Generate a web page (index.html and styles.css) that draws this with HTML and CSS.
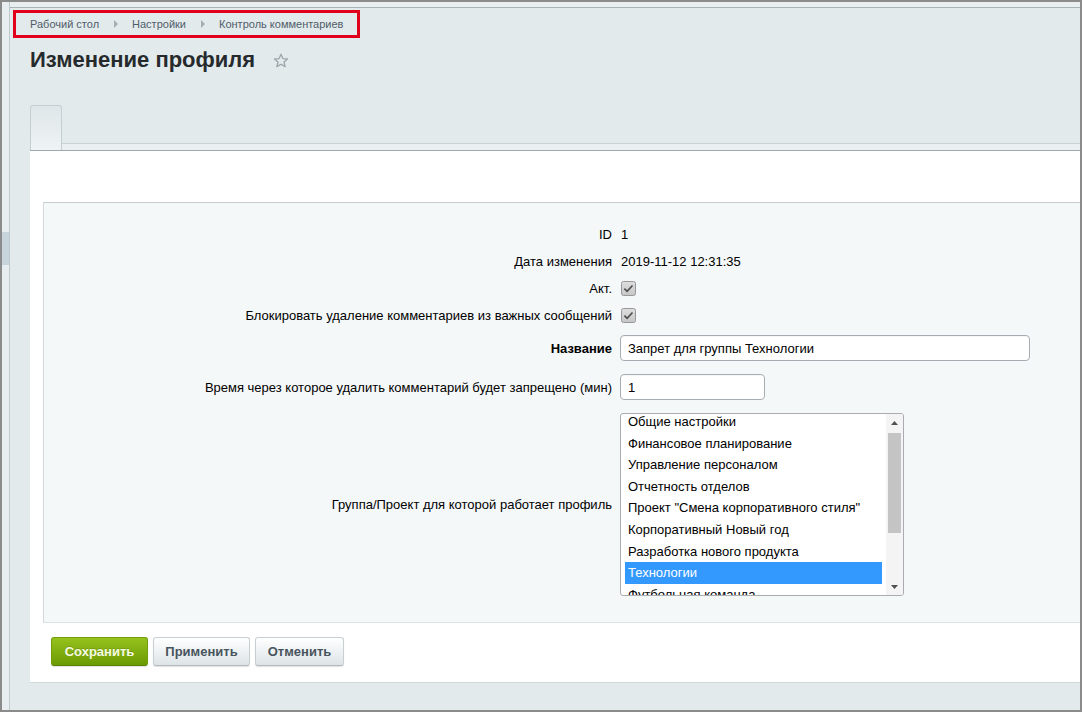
FILE: index.html
```html
<!DOCTYPE html>
<html lang="ru">
<head>
<meta charset="utf-8">
<title>Изменение профиля</title>
<link rel="stylesheet" href="styles.css">
</head>
<body>
<div class="frame">
  <div class="side"><div class="handle"></div></div>
  <div class="main">
    <div class="topline"></div>
    <div class="crumbs">
      <span class="crumb">Рабочий стол</span>
      <span class="sep"></span>
      <span class="crumb">Настройки</span>
      <span class="sep"></span>
      <span class="crumb">Контроль комментариев</span>
    </div>
    <div class="title-row">
      <h1 class="title">Изменение профиля</h1>
      <svg class="star" width="16" height="16" viewBox="0 0 16 16"><path d="M8 1.3l1.9 4.3 4.6.4-3.5 3 1.1 4.6L8 11.2l-4.1 2.4 1.1-4.6-3.5-3 4.6-.4z" fill="none" stroke="#9ba6ac" stroke-width="1.3" stroke-linejoin="round"/></svg>
    </div>
    <div class="tabs">
      <div class="tab"></div>
      <div class="tabfill"><div class="tabstrip"></div></div>
    </div>
    <div class="panel">
      <div class="form">
        <div class="row r27"><div class="label">ID</div><div class="val">1</div></div>
        <div class="row r27"><div class="label">Дата изменения</div><div class="val">2019-11-12 12:31:35</div></div>
        <div class="row r27"><div class="label">Акт.</div><div class="val"><svg class="cb" width="15" height="15" viewBox="0 0 15 15"><defs><linearGradient id="g1" x1="0" y1="0" x2="0" y2="1"><stop offset="0" stop-color="#dedede"/><stop offset="1" stop-color="#c6c6c6"/></linearGradient></defs><rect x="0.5" y="0.5" width="14" height="14" rx="2" fill="url(#g1)" stroke="#989898"/><path d="M3.4 7.6l2.7 2.7 5.4-5.8" fill="none" stroke="#4d4d4d" stroke-width="1.6"/></svg></div></div>
        <div class="row r27"><div class="label">Блокировать удаление комментариев из важных сообщений</div><div class="val"><svg class="cb" width="15" height="15" viewBox="0 0 15 15"><rect x="0.5" y="0.5" width="14" height="14" rx="2" fill="url(#g1)" stroke="#989898"/><path d="M3.4 7.6l2.7 2.7 5.4-5.8" fill="none" stroke="#4d4d4d" stroke-width="1.6"/></svg></div></div>
        <div class="row r-name"><div class="label bold">Название</div><div class="val"><div class="input wide">Запрет для группы Технологии</div></div></div>
        <div class="row r-time"><div class="label">Время через которое удалить комментарий будет запрещено (мин)</div><div class="val"><div class="input narrow">1</div></div></div>
        <div class="row r-list"><div class="label">Группа/Проект для которой работает профиль</div>
          <div class="val">
            <div class="listbox">
              <div class="opts">
                <div class="opts-inner">
                  <div class="opt">Общие настройки</div>
                  <div class="opt">Финансовое планирование</div>
                  <div class="opt">Управление персоналом</div>
                  <div class="opt">Отчетность отделов</div>
                  <div class="opt">Проект "Смена корпоративного стиля"</div>
                  <div class="opt">Корпоративный Новый год</div>
                  <div class="opt">Разработка нового продукта</div>
                  <div class="opt sel">Технологии</div>
                  <div class="opt">Футбольная команда</div>
                </div>
              </div>
              <div class="scroll">
                <div class="arrow"><svg width="7" height="4" viewBox="0 0 7 4"><path d="M0 4L3.5 0 7 4z" fill="#505050"/></svg></div>
                <div class="track"><div class="thumb"></div></div>
                <div class="arrow"><svg width="7" height="4" viewBox="0 0 7 4"><path d="M0 0L3.5 4 7 0z" fill="#505050"/></svg></div>
              </div>
            </div>
          </div>
        </div>
      </div>
      <div class="buttons">
        <button class="btn save">Сохранить</button>
        <button class="btn apply">Применить</button>
        <button class="btn cancel">Отменить</button>
      </div>
    </div>
  </div>
</div>
</body>
</html>
```

FILE: styles.css
```css
html, body {
  margin: 0;
  padding: 0;
}
body {
  font-family: "Liberation Sans", Arial, sans-serif;
  font-size: 13px;
  color: #000;
}
.frame {
  width: 1082px;
  height: 712px;
  box-sizing: border-box;
  border: 2px solid #8b8b8b;
  background: #e3eaec;
  display: flex;
  overflow: hidden;
}
.side {
  width: 8px;
  flex: none;
  box-sizing: border-box;
  border-right: 1px solid #c0cacd;
  background: #e8eef0;
}
.handle {
  margin-top: 230px;
  height: 33px;
  background: #c7d4dc;
}
.main {
  flex: 1;
  display: flex;
  flex-direction: column;
  align-items: stretch;
  min-width: 0;
}
.topline {
  height: 5px;
  background: #e9eef0;
  border-bottom: 1px solid #a9b3b6;
}
.crumbs {
  align-self: flex-start;
  margin: 2px 0 0 3px;
  height: 28px;
  box-sizing: border-box;
  border: 3px solid #e1001c;
  padding: 0 14px;
  display: flex;
  align-items: center;
  font-size: 11px;
  color: #4f5d6a;
}
.sep {
  width: 0;
  height: 0;
  border-top: 4px solid transparent;
  border-bottom: 4px solid transparent;
  border-left: 4px solid #a3adb3;
  margin: 0 14px 0 15px;
}
.title-row {
  margin: 8px 0 0 20px;
  height: 28px;
  display: flex;
  align-items: center;
}
.title {
  margin: 0;
  font-size: 22px;
  line-height: 28px;
  font-weight: bold;
  color: #262a2c;
}
.star {
  margin-left: 18px;
  margin-top: 1px;
}
.tabs {
  margin: 31px 0 0 20px;
  height: 45px;
  display: flex;
}
.tab {
  width: 32px;
  box-sizing: border-box;
  border: 1px solid #c5cfd3;
  border-bottom: none;
  border-radius: 3px 3px 0 0;
  background: linear-gradient(#dfe6e9, #eef3f4);
}
.tabfill {
  flex: 1;
  display: flex;
  flex-direction: column;
  justify-content: flex-end;
}
.tabstrip {
  height: 6px;
  border-top: 1px solid #c9d3d6;
  background: #eaeff1;
}
.panel {
  margin-left: 20px;
  background: #fff;
  border-top: 1px solid #9fa8ab;
  border-bottom: 1px solid #d0d8db;
  padding-top: 51px;
}
.form {
  margin-left: 13px;
  background: #f5f8f9;
  border-top: 1px solid #c6cdd0;
  border-left: 1px solid #d3d9db;
  border-bottom: 1px solid #dde4e6;
  padding: 18px 0 26px;
}
.row {
  display: grid;
  grid-template-columns: 576px 1fr;
  align-items: center;
}
.r27 {
  height: 27px;
}
.r-name {
  padding-top: 6px;
  margin-bottom: 13px;
}
.r-time {
  margin-bottom: 13px;
}
.label {
  text-align: right;
  padding-right: 8px;
  color: #000;
  white-space: nowrap;
}
.label.bold {
  font-weight: bold;
}
.val {
  padding-left: 1px;
  display: flex;
  align-items: center;
}
.cb {
  display: block;
}
.input {
  height: 26px;
  box-sizing: border-box;
  margin-left: -1px;
  border: 1px solid #a6aeb3;
  border-radius: 4px;
  background: #fff;
  padding: 0 7px;
  display: flex;
  align-items: center;
  box-shadow: inset 0 1px 1px rgba(0,0,0,0.04);
}
.input.wide {
  width: 410px;
}
.input.narrow {
  width: 145px;
}
.listbox {
  margin-left: -1px;
  width: 284px;
  height: 183px;
  box-sizing: border-box;
  border: 1px solid #a9adb1;
  border-radius: 3px;
  background: #fff;
  display: flex;
  overflow: hidden;
}
.opts {
  flex: 1;
  overflow: hidden;
  padding: 0 4px;
}
.opts-inner {
  margin-top: -3px;
}
.opt {
  height: 21.6px;
  line-height: 21.6px;
  padding-left: 3px;
  white-space: nowrap;
  color: #000;
}
.opt.sel {
  background: #3399ff;
  color: #fff;
}
.scroll {
  width: 17px;
  flex: none;
  background: #f4f4f4;
  display: flex;
  flex-direction: column;
}
.arrow {
  height: 17px;
  display: flex;
  align-items: center;
  justify-content: center;
}
.arrow svg {
  display: block;
}
.track {
  flex: 1;
}
.thumb {
  margin: 2px 2px 0;
  height: 100px;
  background: #c4c4c4;
}
.buttons {
  padding: 14px 0 16px 21px;
  display: flex;
  gap: 5px;
}
.btn {
  height: 29px;
  box-sizing: border-box;
  padding: 0;
  font-family: "Liberation Sans", Arial, sans-serif;
  font-size: 13px;
  font-weight: bold;
  color: #48545d;
  border: 1px solid #c8cfd2;
  border-bottom-color: #b3bbbf;
  border-radius: 3px;
  background: linear-gradient(#ffffff, #dde4e7);
  box-shadow: 0 1px 1px rgba(0,0,0,0.12);
}
.btn.save {
  width: 97px;
  color: #f6fbe4;
  border-color: #729f09;
  border-bottom-color: #5b8200;
  background: linear-gradient(#97c21d, #6b9a03);
  text-shadow: 0 -1px 0 rgba(0,0,0,0.15);
}
.btn.apply {
  width: 97px;
}
.btn.cancel {
  width: 89px;
}
```
